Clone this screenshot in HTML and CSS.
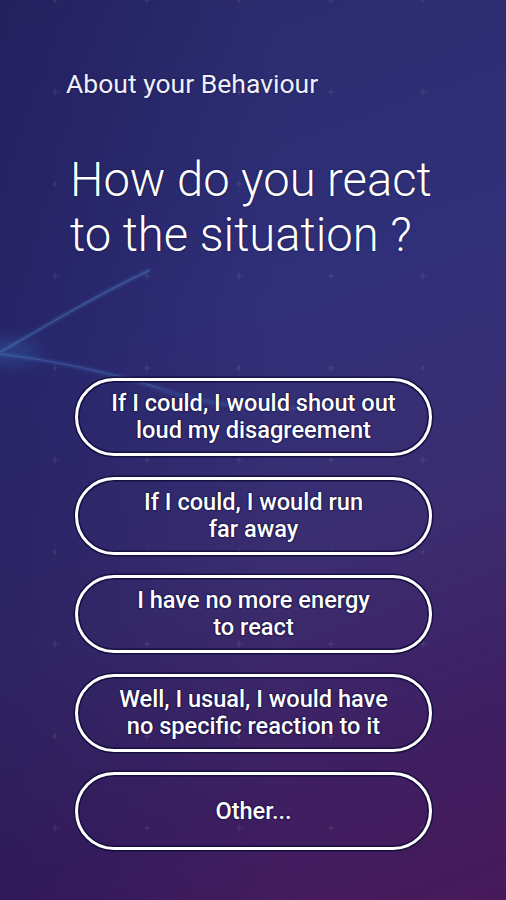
FILE: index.html
```html
<!DOCTYPE html>
<html lang="en">

<head>
  <meta charset="UTF-8">
  <meta name="viewport" content="width=device-width, initial-scale=1.0">
  <title>About your Behaviour</title>
  <link rel="stylesheet" href="styles.css">
</head>

<body>
  <svg class="backdrop" width="506" height="900" viewBox="0 0 506 900" aria-hidden="true">
    <defs>
      <pattern id="marks" x="55" y="0" width="92" height="92" patternUnits="userSpaceOnUse">
        <path d="M-3.5 0H3.5M0 -3.5V3.5M88.5 0H95.5M92 -3.5V3.5M-3.5 92H3.5M0 88.5V95.5M88.5 92H95.5M92 88.5V95.5" stroke="rgba(255,255,255,0.09)" stroke-width="1"/>
      </pattern>
      <filter id="soft" x="-20%" y="-50%" width="140%" height="200%">
        <feGaussianBlur stdDeviation="1.8"/>
      </filter>
      <filter id="glow" x="-50%" y="-50%" width="200%" height="200%">
        <feGaussianBlur stdDeviation="9"/>
      </filter>
    </defs>
    <rect width="506" height="900" fill="url(#marks)"/>
    <ellipse cx="6" cy="352" rx="36" ry="12" fill="rgba(60,130,210,0.28)" filter="url(#glow)"/>
    <path d="M0 352 C 40 330, 90 298, 150 270" stroke="rgba(80,160,230,0.4)" stroke-width="2" fill="none" filter="url(#soft)"/>
    <path d="M0 352 C 40 330, 90 298, 150 270" stroke="rgba(150,205,250,0.25)" stroke-width="0.8" fill="none"/>
    <path d="M0 354 C 50 360, 110 372, 170 392 S 300 410, 340 405" stroke="rgba(70,140,220,0.35)" stroke-width="2.5" fill="none" filter="url(#soft)"/>
    <path d="M0 354 C 50 360, 110 372, 160 388" stroke="rgba(140,200,250,0.2)" stroke-width="0.8" fill="none"/>
  </svg>

  <main class="screen">
    <p class="eyebrow">About your Behaviour</p>
    <h1 class="question">How do you react<br>to the situation ?</h1>

    <div class="answers">
      <button class="answer">If I could, I would shout out<br>loud my disagreement</button>
      <button class="answer">If I could, I would run<br>far away</button>
      <button class="answer">I have no more energy<br>to react</button>
      <button class="answer">Well, I usual, I would have<br>no specific reaction to it</button>
      <button class="answer">Other...</button>
    </div>
  </main>
</body>

</html>
```

FILE: styles.css
```css
body {
  margin: 0;
  padding: 0;
  width: 506px;
  height: 900px;
  overflow: hidden;
  background: linear-gradient(160deg, #2a2a6b 0%, #30307a 35%, #3b2d70 62%, #3e1f62 82%, #47195a 100%);
  font-family: Roboto, "Liberation Sans", sans-serif;
  color: #fff;
  position: relative;
}

body::before {
  content: "";
  position: absolute;
  inset: 0;
  background: linear-gradient(90deg, rgba(20, 15, 70, 0.35) 0%, rgba(20, 15, 70, 0) 55%);
}

.backdrop {
  position: absolute;
  top: 0;
  left: 0;
}

.screen {
  position: relative;
  padding: 68px 0 0 0;
}

.eyebrow {
  margin: 0 0 0 66px;
  font-size: 26.5px;
  line-height: 31px;
  font-weight: 400;
  color: #eef0fa;
  text-shadow: 0 0 2px rgba(15, 12, 60, 0.9);
}

.question {
  margin: 54px 0 0 70px;
  font-size: 47.2px;
  line-height: 55px;
  font-weight: 300;
  color: #fff;
  text-shadow: 0 0 2px rgba(15, 12, 60, 0.9);
}

.answers {
  margin: 115px 0 0 75px;
  width: 357px;
  display: flex;
  flex-direction: column;
  gap: 20.5px;
}

.answer {
  height: 78px;
  border: 3px solid #fff;
  border-radius: 39px;
  background: transparent;
  box-shadow: 0 0 0 1.5px rgba(18, 14, 60, 0.9), inset 0 0 0 1.5px rgba(18, 14, 60, 0.9);
  color: #fff;
  font-family: Roboto, "Liberation Sans", sans-serif;
  font-size: 23.6px;
  line-height: 27px;
  font-weight: 500;
  text-align: center;
  text-shadow: 0 0 2px rgba(15, 12, 60, 1), 0 0 1px rgba(15, 12, 60, 1), 0 0 1px rgba(15, 12, 60, 1);
  cursor: pointer;
  padding: 0;
}
```
